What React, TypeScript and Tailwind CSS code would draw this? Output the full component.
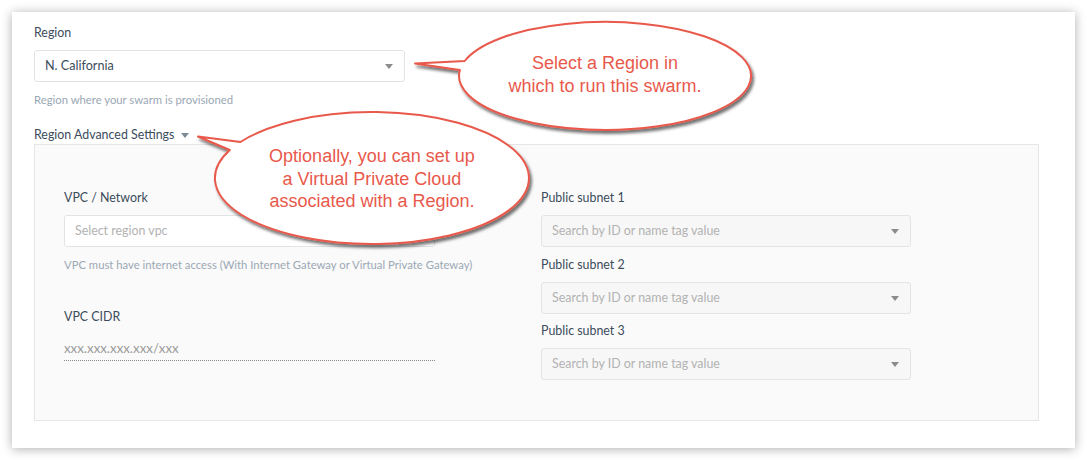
import React from "react";

const labelCls = "text-[12.4px] leading-4 text-[#3b4c5b]";
const helpCls = "text-[11.3px] leading-[14px] text-[#9aa8b4]";

function Caret({ color = "border-t-[#8c8c8c]" }: { color?: string }) {
  return (
    <span
      className={`inline-block w-0 h-0 border-l-[4px] border-r-[4px] border-t-[5px] border-l-transparent border-r-transparent ${color}`}
    />
  );
}

function SelectBox({
  value,
  placeholder,
  disabled,
  caret = true,
}: {
  value?: string;
  placeholder?: string;
  disabled?: boolean;
  caret?: boolean;
}) {
  return (
    <div
      className={`flex items-center justify-between h-8 rounded-[3px] border pl-[10px] pr-[11px] ${
        disabled ? "bg-[#f7f7f7] border-[#e4e4e4]" : "bg-white border-[#e1e4e6]"
      }`}
    >
      {value ? (
        <span className="text-[12.6px] text-[#3b4c5b]">{value}</span>
      ) : (
        <span className="text-[12.4px] text-[#b2b2b2]">{placeholder}</span>
      )}
      {caret && <Caret />}
    </div>
  );
}

function Callouts() {
  return (
    <svg
      className="absolute left-0 top-0 pointer-events-none"
      width="1087"
      height="460"
      viewBox="0 0 1087 460"
    >
      <defs>
        <filter id="cs" x="-20%" y="-20%" width="140%" height="140%">
          <feDropShadow dx="2" dy="3" stdDeviation="1.6" floodColor="#000" floodOpacity="0.55" />
        </filter>
      </defs>
      <path
        d="M 464.7 61 A 146 54 0 1 1 459.9 70 L 415 63.5 Z"
        fill="#fff"
        stroke="#e8594c"
        strokeWidth="2"
        strokeLinejoin="round"
        filter="url(#cs)"
      />
      <path
        d="M 240.4 142 A 157 66 0 1 1 229.8 150 L 198 136.5 Z"
        fill="#fff"
        stroke="#e8594c"
        strokeWidth="2"
        strokeLinejoin="round"
        filter="url(#cs)"
      />
    </svg>
  );
}

export default function App() {
  return (
    <div className="relative w-[1087px] h-[460px] bg-white overflow-hidden pt-3 pl-3 font-['Lato',sans-serif]">
      <div className="w-[1063px] h-[436px] bg-white shadow-[0_1px_10px_rgba(0,0,0,0.32)] pl-[22px] pt-[13px]">
        <div className={labelCls}>Region</div>
        <div className="mt-[9px] w-[371px]">
          <SelectBox value="N. California" />
        </div>
        <div className={`${helpCls} mt-[11px]`}>Region where your swarm is provisioned</div>
        <div className={`${labelCls} mt-5 flex items-center gap-[7px]`}>
          <span>Region Advanced Settings</span>
          <Caret color="border-t-[#7d8b97]" />
        </div>
        <div className="mt-px w-[1005px] h-[277px] bg-[#fafafa] border border-[#e6e6e6] pl-[29px] pt-[45px] flex">
          {/* left column */}
          <div className="w-[371px]">
            <div className={labelCls}>VPC / Network</div>
            <div className="mt-[9px]">
              <SelectBox placeholder="Select region vpc" caret={false} />
            </div>
            <div className={`${helpCls} mt-[11px] whitespace-nowrap`}>
              VPC must have internet access (With Internet Gateway or Virtual Private Gateway)
            </div>
            <div className={`${labelCls} mt-[37px]`}>VPC CIDR</div>
            <div className="mt-3 h-6 flex items-center border-b border-dotted border-[#8a8a8a] text-[13.3px] text-[#9b9b9b]">
              xxx.xxx.xxx.xxx/xxx
            </div>
          </div>
          {/* right column */}
          <div className="ml-[106px] w-[370px]">
            <div className={labelCls}>Public subnet 1</div>
            <div className="mt-[9px]">
              <SelectBox placeholder="Search by ID or name tag value" disabled />
            </div>
            <div className={`${labelCls} mt-[10px]`}>Public subnet 2</div>
            <div className="mt-[9px]">
              <SelectBox placeholder="Search by ID or name tag value" disabled />
            </div>
            <div className={`${labelCls} mt-[9px]`}>Public subnet 3</div>
            <div className="mt-[9px]">
              <SelectBox placeholder="Search by ID or name tag value" disabled />
            </div>
          </div>
        </div>
      </div>

      <Callouts />

      <div className="absolute left-[459px] top-[52px] w-[292px] text-center text-[18px] leading-[23px] text-[#e8594c] font-['Liberation_Sans',Arial,sans-serif]">
        Select a Region in
        <br />
        which to run this swarm.
      </div>
      <div className="absolute left-[215px] top-[145px] w-[314px] text-center text-[18px] leading-[22.5px] text-[#e8594c] font-['Liberation_Sans',Arial,sans-serif]">
        Optionally, you can set up
        <br />
        a Virtual Private Cloud
        <br />
        associated with a Region.
      </div>
    </div>
  );
}
